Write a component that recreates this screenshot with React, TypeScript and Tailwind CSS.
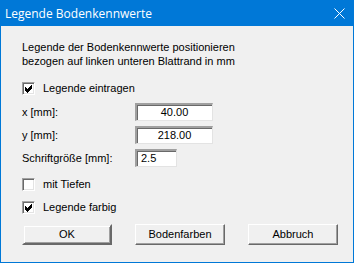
import React from "react";

// sunken edit field, classic win32 look
function Field({ value, width, center }: { value: string; width: string; center?: boolean }) {
  return (
    <div
      className={`${width} h-[18px] bg-white border-t-2 border-l-2 border-b border-r border-t-[#a0a0a0] border-l-[#a0a0a0] border-b-[#e3e3e3] border-r-[#e3e3e3] shadow-[inset_1px_1px_0_#696969] flex items-center ${
        center ? "justify-center" : "pl-[4px]"
      }`}
    >
      <span className="leading-none">{value}</span>
    </div>
  );
}

function Check({ checked, label }: { checked: boolean; label: string }) {
  return (
    <div className="flex items-center h-[14px]">
      <div className="w-[13px] h-[13px] bg-white border border-t-[#a0a0a0] border-l-[#a0a0a0] border-b-white border-r-white shadow-[inset_1px_1px_0_#696969,inset_-1px_-1px_0_#e3e3e3] flex items-center justify-center">
        {checked && (
          <svg width="9" height="9" viewBox="0 0 9 9">
            <path d="M1 3.5 L3.5 6 L8 1.5 M1 4.5 L3.5 7 L8 2.5 M1 5.5 L3.5 8 L8 3.5" stroke="#000" strokeWidth="1" fill="none" shapeRendering="crispEdges" />
          </svg>
        )}
      </div>
      <span className="ml-[8px]">{label}</span>
    </div>
  );
}

function Btn({ label, primary }: { label: string; primary?: boolean }) {
  return (
    <div
      className={`w-[90px] h-[21px] flex items-center justify-center bg-[#f0f0f0] ${
        primary
          ? "border-2 border-t-[#f0f0f0] border-l-[#f0f0f0] border-b-[#696969] border-r-[#696969] shadow-[inset_1px_1px_0_#fff,inset_-1px_-1px_0_#a0a0a0]"
          : "border border-t-white border-l-white border-b-[#696969] border-r-[#696969] shadow-[inset_-1px_-1px_0_#a0a0a0]"
      }`}
    >
      {label}
    </div>
  );
}

export default function App() {
  return (
    <div className="w-[355px] h-[263px] bg-white" style={{ fontFamily: '"Liberation Sans", Arial, sans-serif' }}>
      <div className="w-[354px] h-[263px] border border-[#0078d7] bg-[#f0f0f0] flex flex-col text-[11px] text-black">
        {/* title bar */}
        <div className="h-[25px] bg-[#0078d7] flex items-center justify-between pl-[4px] pr-[8px] shrink-0">
          <span className="text-white text-[12px]" style={{ fontFamily: '"Open Sans", "Noto Sans", sans-serif' }}>
            Legende Bodenkennwerte
          </span>
          <svg width="11" height="11" viewBox="0 0 11 11">
            <path d="M0.5 0.5 L10.5 10.5 M10.5 0.5 L0.5 10.5" stroke="#fff" strokeWidth="1" />
          </svg>
        </div>

        <div className="pl-[21px] pt-[14px] flex flex-col">
          <div className="leading-[14px]">Legende der Bodenkennwerte positionieren</div>
          <div className="leading-[14px]">bezogen auf linken unteren Blattrand in mm</div>

          <div className="mt-[13px]">
            <Check checked label="Legende eintragen" />
          </div>

          <div className="mt-[8px] flex flex-col gap-[5px]">
            <div className="flex items-center">
              <span className="w-[113px]">x [mm]:</span>
              <Field value="40.00" width="w-[78px]" center />
            </div>
            <div className="flex items-center">
              <span className="w-[113px]">y [mm]:</span>
              <Field value="218.00" width="w-[78px]" center />
            </div>
            <div className="flex items-center">
              <span className="w-[113px]">Schriftgröße [mm]:</span>
              <Field value="2.5" width="w-[42px]" />
            </div>
          </div>

          <div className="mt-[10px]">
            <Check checked={false} label="mit Tiefen" />
          </div>
          <div className="mt-[9px]">
            <Check checked label="Legende farbig" />
          </div>

          <div className="mt-[10px] flex gap-[23px]">
            <Btn label="OK" primary />
            <Btn label="Bodenfarben" />
            <Btn label="Abbruch" />
          </div>
        </div>
      </div>
    </div>
  );
}
